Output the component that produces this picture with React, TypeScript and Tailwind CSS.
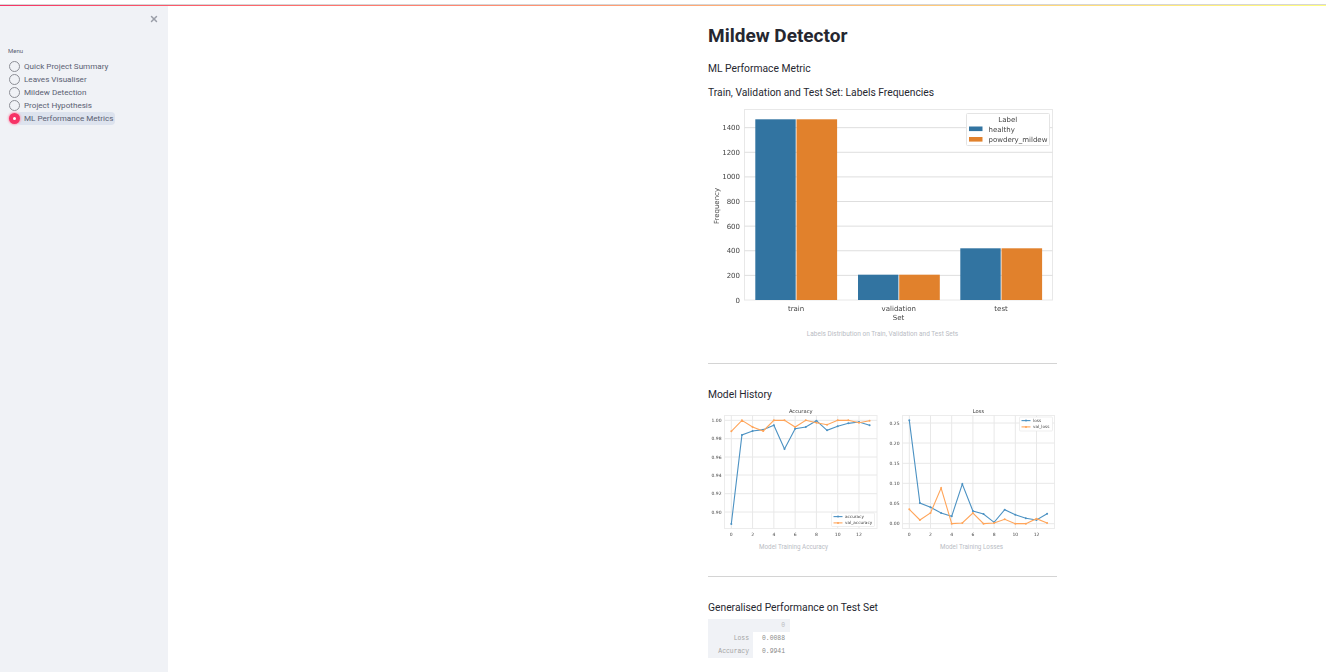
import { X } from "lucide-react";

const menu = [
    "Quick Project Summary",
    "Leaves Visualiser",
    "Mildew Detection",
    "Project Hypothesis",
    "ML Performance Metrics",
];

const CHART_FONT = "'DejaVu Sans', sans-serif";

const barGroups = [
    { x: 755.3, top: 119.3, label: "train" },
    { x: 858, top: 274.7, label: "validation" },
    { x: 960.3, top: 248.3, label: "test" },
];

function BarChart() {
    const ticks = [0, 200, 400, 600, 800, 1000, 1200, 1400];
    return (
        <svg viewBox="708 105 349 220" className="block w-[349px] h-[220px] blur-[0.3px]" fontFamily={CHART_FONT}>
            <rect x="744.5" y="109.5" width="308" height="190.5" fill="#fff" stroke="#e8e8e8" strokeWidth="1" />
            {ticks.map((t) => {
                const y = 300 - t * 0.1231;
                return (
                    <g key={t}>
                        {t > 0 && <line x1="744.5" x2="1052.5" y1={y} y2={y} stroke="#dedede" strokeWidth="1" />}
                        <text x="740" y={y + 2.5} textAnchor="end" fontSize="7" fill="#444">
                            {t}
                        </text>
                    </g>
                );
            })}
            {barGroups.map((g) => (
                <g key={g.label}>
                    <rect x={g.x} y={g.top} width="40.4" height={300 - g.top} fill="#3274a1" />
                    <rect x={g.x + 41.2} y={g.top} width="40.6" height={300 - g.top} fill="#e1812c" />
                    <text x={g.x + 40.8} y="310.5" textAnchor="middle" fontSize="7" fill="#444">
                        {g.label}
                    </text>
                </g>
            ))}
            <text x="898.5" y="319.5" textAnchor="middle" fontSize="7" fill="#444">
                Set
            </text>
            <text x="719" y="206" textAnchor="middle" fontSize="7" fill="#444" transform="rotate(-90 719 206)">
                Frequency
            </text>
            <rect x="966.5" y="113.5" width="83" height="32" rx="1" fill="#fff" stroke="#e4e4e4" />
            <text x="1007.7" y="121.5" textAnchor="middle" fontSize="7" fill="#444">
                Label
            </text>
            <rect x="969" y="126.5" width="13.5" height="4.6" fill="#3274a1" />
            <rect x="969" y="137" width="13.5" height="4.6" fill="#e1812c" />
            <text x="988.5" y="131.5" fontSize="7" fill="#444">
                healthy
            </text>
            <text x="988.5" y="141.5" fontSize="7" fill="#444">
                powdery_mildew
            </text>
        </svg>
    );
}

type LineChartProps = {
    title: string;
    originX: number;
    axisLeft: number;
    axisRight: number;
    zeroX: number;
    stepX: number;
    yTicks: { label: string; y: number }[];
    series: { color: string; points: number[] }[];
    legend: { x: number; y: number; w: number; h: number; names: string[] };
};

function LineChart({ title, originX, axisLeft, axisRight, zeroX, stepX, yTicks, series, legend }: LineChartProps) {
    const xTicks = [0, 2, 4, 6, 8, 10, 12];
    return (
        <svg
            viewBox={`${originX} 405 171 132`}
            className="block w-[171px] h-[132px] blur-[0.4px]"
            fontFamily={CHART_FONT}
        >
            <rect x={axisLeft} y="415.5" width={axisRight - axisLeft} height="113" fill="#fff" stroke="#ececec" />
            {xTicks.map((t) => {
                const x = zeroX + t * stepX;
                return (
                    <g key={t}>
                        <line x1={x} x2={x} y1="415.5" y2="528.5" stroke="#e8e8e8" />
                        <text x={x} y="535.5" textAnchor="middle" fontSize="4.5" fill="#444">
                            {t}
                        </text>
                    </g>
                );
            })}
            {yTicks.map((t) => (
                <g key={t.label}>
                    <line x1={axisLeft} x2={axisRight} y1={t.y} y2={t.y} stroke="#e8e8e8" />
                    <text x={axisLeft - 3} y={t.y + 1.6} textAnchor="end" fontSize="4.5" fill="#444">
                        {t.label}
                    </text>
                </g>
            ))}
            <text x={(axisLeft + axisRight) / 2} y="412.8" textAnchor="middle" fontSize="5.2" fill="#333">
                {title}
            </text>
            {series.map((s) => {
                const coords = s.points.map((p, i) => ({ x: zeroX + i * stepX, y: 400 + p / 3 }));
                return (
                    <g key={s.color}>
                        <polyline
                            points={coords.map((c) => `${c.x},${c.y}`).join(" ")}
                            fill="none"
                            stroke={s.color}
                            strokeWidth="1.1"
                        />
                        {coords.map((c) => (
                            <circle key={c.x} cx={c.x} cy={c.y} r="1" fill={s.color} />
                        ))}
                    </g>
                );
            })}
            <rect
                x={legend.x}
                y={legend.y}
                width={legend.w}
                height={legend.h}
                rx="1"
                fill="#fff"
                stroke="#e4e4e4"
                strokeWidth="0.6"
            />
            {legend.names.map((name, i) => {
                const y = legend.y + 3.6 + i * 6.3;
                return (
                    <g key={name}>
                        <line x1={legend.x + 2} x2={legend.x + 11} y1={y} y2={y} stroke={series[i].color} strokeWidth="1.1" />
                        <circle cx={legend.x + 6.5} cy={y} r="1" fill={series[i].color} />
                        <text x={legend.x + 13.5} y={y + 1.5} fontSize="4.2" fill="#444">
                            {name}
                        </text>
                    </g>
                );
            })}
        </svg>
    );
}

const accuracyTicks = [
    { label: "1.00", y: 420.3 },
    { label: "0.98", y: 438.7 },
    { label: "0.96", y: 457 },
    { label: "0.94", y: 475 },
    { label: "0.92", y: 493.7 },
    { label: "0.90", y: 512 },
];

const lossTicks = [
    { label: "0.25", y: 423 },
    { label: "0.20", y: 443 },
    { label: "0.15", y: 463.3 },
    { label: "0.10", y: 483.3 },
    { label: "0.05", y: 503.7 },
    { label: "0.00", y: 523.7 },
];

const accuracy = [372, 105, 93, 89, 76, 147, 86, 81, 62, 91, 79, 70, 66, 76];
const valAccuracy = [94, 61, 81, 93, 61, 61, 81, 61, 68, 74, 61, 61, 68, 62];
const loss = [61, 309, 322, 339, 349, 252, 333, 342, 367, 329, 344, 355, 360, 341];
const valLoss = [328, 360, 339, 264, 371, 369, 339, 371, 369, 358, 371, 371, 356, 369];

export default function App() {
    return (
        <div
            className="relative h-[672px] overflow-hidden bg-white text-[#262730]"
            style={{ fontFamily: "Roboto, sans-serif" }}
        >
            <div className="h-1" />
            <div className="h-px bg-[#d6d6d6]" />
            <div className="h-px bg-gradient-to-r from-[#f63366] to-[#fffd80]" />
            <div className="flex h-[666px]">
                <aside className="w-[168px] shrink-0 bg-[#f0f2f6] pl-[8.5px] text-[#5a6072]">
                    <div className="flex justify-end pr-[9px] pt-2">
                        <X size={10} strokeWidth={3.5} className="text-[#9a9ea8]" />
                    </div>
                    <p className="mt-[22px] -ml-[0.5px] text-[6px] leading-[10px]">Menu</p>
                    <ul className="mt-[4px] flex flex-col">
                        {menu.map((item, i) => {
                            const active = i === menu.length - 1;
                            return (
                                <li key={item} className="flex h-[13px] items-center whitespace-nowrap">
                                    {active ? (
                                        <span className="relative z-10 flex h-[11px] w-[11px] items-center justify-center rounded-full bg-[#f63366] shadow-[0_0_2px_1px_#f9a5bc]">
                                            <span className="h-[3px] w-[3px] rounded-full bg-white" />
                                        </span>
                                    ) : (
                                        <span className="h-[11px] w-[11px] rounded-full border border-[#8d8f96] bg-[#f0f2f6]" />
                                    )}
                                    <span
                                        className={`-ml-[3px] rounded-sm pl-[7.5px] text-[8.1px] leading-[13px] ${
                                            active ? "w-[98.5px] bg-[#dde3ee]" : ""
                                        }`}
                                    >
                                        {item}
                                    </span>
                                </li>
                            );
                        })}
                    </ul>
                </aside>
                <main className="ml-[540px] w-[349px] shrink-0">
                    <h1 className="mt-[16px] text-[19px] font-bold leading-[28px]">Mildew Detector</h1>
                    <p className="mt-[12px] text-[10.3px] leading-[14px]">ML Performace Metric</p>
                    <p className="mt-[10px] text-[10.3px] leading-[14px]">Train, Validation and Test Set: Labels Frequencies</p>
                    <div className="mt-[5px]">
                        <BarChart />
                    </div>
                    <p className="mt-[5px] text-center text-[6.5px] leading-[8px] text-[#b9bcc4]">
                        Labels Distribution on Train, Validation and Test Sets
                    </p>
                    <hr className="mt-[25px] border-t border-[#d4d4d4]" />
                    <p className="mt-[24px] text-[10.3px] leading-[14px]">Model History</p>
                    <div className="mt-[3px] flex justify-between">
                        <figure>
                            <LineChart
                                title="Accuracy"
                                originX={707}
                                axisLeft={723.5}
                                axisRight={876}
                                zeroX={730.3}
                                stepX={10.64}
                                yTicks={accuracyTicks}
                                series={[
                                    { color: "#4c92c3", points: accuracy },
                                    { color: "#ffa55a", points: valAccuracy },
                                ]}
                                legend={{ x: 830.5, y: 513, w: 43, h: 13.5, names: ["accuracy", "val_accuracy"] }}
                            />
                            <figcaption className="mt-[6px] text-center text-[6.3px] leading-[8px] text-[#b9bcc4]">
                                Model Training Accuracy
                            </figcaption>
                        </figure>
                        <figure>
                            <LineChart
                                title="Loss"
                                originX={886}
                                axisLeft={902.5}
                                axisRight={1054.5}
                                zeroX={909.3}
                                stepX={10.6}
                                yTicks={lossTicks}
                                series={[
                                    { color: "#4c92c3", points: loss },
                                    { color: "#ffa55a", points: valLoss },
                                ]}
                                legend={{ x: 1019.5, y: 417, w: 33, h: 14, names: ["loss", "val_loss"] }}
                            />
                            <figcaption className="mt-[6px] text-center text-[6.3px] leading-[8px] text-[#b9bcc4]">
                                Model Training Losses
                            </figcaption>
                        </figure>
                    </div>
                    <hr className="mt-[25px] border-t border-[#d4d4d4]" />
                    <p className="mt-[24px] text-[10.3px] leading-[14px]">Generalised Performance on Test Set</p>
                    <table
                        className="mt-[4px] w-[82px] table-fixed text-right text-[6.4px] leading-[13px] text-[#a3a3a3]"
                        style={{ fontFamily: "'Liberation Mono', monospace" }}
                    >
                        <tbody>
                            <tr className="h-[13px] bg-[#f0f2f6]">
                                <td className="w-[45px] bg-[#f0f2f6]" />
                                <td className="pr-[5px] text-[#b9bbc0]">0</td>
                            </tr>
                            <tr className="h-[13px]">
                                <td className="bg-[#f0f2f6] pr-[4px]">Loss</td>
                                <td className="pr-[5px] text-[#8a8a8a]">0.0088</td>
                            </tr>
                            <tr className="h-[13px]">
                                <td className="bg-[#f0f2f6] pr-[4px]">Accuracy</td>
                                <td className="pr-[5px] text-[#8a8a8a]">0.9941</td>
                            </tr>
                        </tbody>
                    </table>
                </main>
            </div>
        </div>
    );
}
